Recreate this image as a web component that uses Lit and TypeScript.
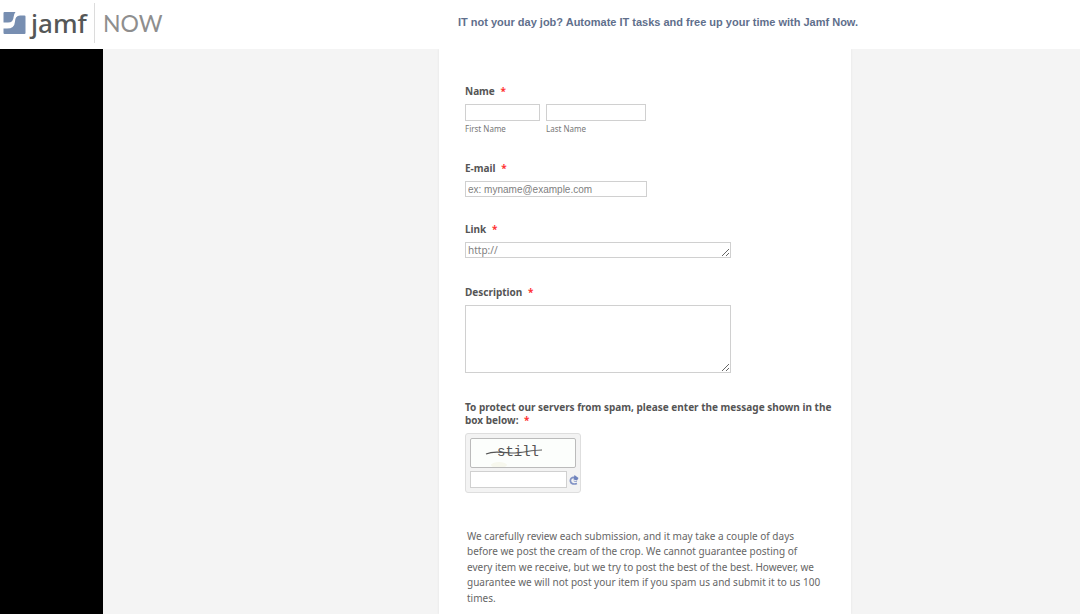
import { LitElement, html, css } from "lit";
import { customElement } from "lit/decorators.js";

@customElement("jamf-banner")
class JamfBanner extends LitElement {
  static styles = css`
    :host {
      display: grid;
      grid-template-columns: 236px 1fr;
      height: 49px;
      background: #fff;
    }
    .logo {
      display: flex;
      align-items: center;
      height: 46px;
      padding-left: 3px;
      color: #555757;
      text-decoration: none;
      font-family: Lato, sans-serif;
      line-height: 32px;
    }
    .mark {
      width: 23px;
      height: 23px;
      margin-right: 5px;
    }
    .brand {
      width: 63px;
      font-family: "Noto Sans", sans-serif;
      font-size: 26px;
      font-weight: 500;
    }
    .product {
      padding-left: 8px;
      border-left: 1px solid #dcdcdc;
      color: #8e8e8e;
      font-size: 23px;
      line-height: 40px;
    }
    .promo {
      margin: 0;
      padding-top: 15px;
      text-align: center;
      font: bold 11px/15px "Liberation Sans", Arial, sans-serif;
      color: #5f6f8c;
    }
  `;
  render() {
    return html`
      <a class="logo" href="#">
        <svg class="mark" viewBox="0 0 23 23" aria-hidden="true">
          <path fill="#778eb1" d="M1.500 0H12.500Q10.800 2 10.600 5Q10.300 10.500 5 10.500H.5V1Q.5 0 1.500 0Z" />
          <path fill="#778eb1" d="M22.500 4.500V21Q22.500 22 21.500 22H1.500Q.5 22 .5 21V16.500H4Q11.500 16.500 11.800 10.500Q12 3.500 17 3.500H21.500Q22.500 3.500 22.500 4.500Z" />
        </svg>
        <span class="brand">jamf</span>
        <span class="product">NOW</span>
      </a>
      <p class="promo">IT not your day job? Automate IT tasks and free up your time with Jamf Now.</p>
    `;
  }
}

@customElement("submit-form")
class SubmitForm extends LitElement {
  static styles = css`
    :host {
      display: block;
      font-family: "Noto Sans", "Open Sans", sans-serif;
      color: #555;
    }
    * {
      box-sizing: border-box;
    }
    form {
      padding: 36px 16px 8px 26px;
    }
    .field {
      margin-bottom: 26px;
    }
    .area {
      margin-bottom: 28px;
    }
    .label {
      display: block;
      margin-bottom: 6px;
      font-size: 10px;
      font-weight: 700;
      line-height: 13px;
    }
    .req {
      margin-left: 3px;
      color: #f33;
    }
    input,
    textarea {
      display: block;
      height: 16px;
      margin: 0;
      padding: 0 2px;
      border: 1px solid #d0d0d0;
      border-radius: 0;
      background: #fff;
      color: #555;
      font: 10px/14px "Liberation Sans", Arial, sans-serif;
      outline: none;
    }
    ::placeholder {
      color: #808080;
      opacity: 1;
    }
    .names {
      display: flex;
      gap: 6px;
    }
    .names input {
      height: 17px;
    }
    .first {
      width: 75px;
    }
    .last {
      width: 100px;
    }
    .sub {
      display: block;
      font-size: 8px;
      line-height: 15px;
      color: #777;
    }
    .email {
      width: 182px;
    }
    textarea {
      width: 266px;
      max-width: 100%;
      overflow: hidden;
      resize: both;
      font-family: "Noto Sans", sans-serif;
    }
    .tall {
      height: 68px;
    }
    .captcha {
      display: grid;
      grid-template-columns: 96px 10px;
      gap: 3px;
      width: 116px;
      padding: 4px;
      border: 1px solid #dedede;
      border-radius: 3px;
      background: #f3f3f3;
    }
    .word {
      grid-column: 1 / -1;
      width: 106px;
      height: 30px;
      border: 1px solid #bbb;
      border-radius: 2px;
      background: #fcfefc;
    }
    .word text {
      font: 14px "Liberation Mono", monospace;
      fill: #555;
    }
    .captcha input {
      width: 97px;
      height: 17px;
    }
    .reload {
      align-self: center;
      width: 10px;
      height: 10px;
      padding: 0;
      border: 0;
      background: none;
    }
    .reload svg {
      display: block;
      width: 10px;
      height: 10px;
    }
    .note {
      margin: 36px 0 0;
      padding: 0 14px 0 2px;
      font-size: 10px;
      line-height: 1.54;
      color: #666;
    }
  `;
  render() {
    const req = html`<span class="req">*</span>`;
    return html`
      <form>
        <div class="field" role="group" aria-labelledby="name-label">
          <span class="label" id="name-label">Name ${req}</span>
          <div class="names">
            <div>
              <input class="first" id="first" type="text" />
              <label class="sub" for="first">First Name</label>
            </div>
            <div>
              <input class="last" id="last" type="text" />
              <label class="sub" for="last">Last Name</label>
            </div>
          </div>
        </div>
        <div class="field">
          <label class="label" for="email">E-mail ${req}</label>
          <input class="email" id="email" type="email" placeholder="ex: myname@example.com" />
        </div>
        <div class="field area">
          <label class="label" for="link">Link ${req}</label>
          <textarea id="link" placeholder="http://"></textarea>
        </div>
        <div class="field area">
          <label class="label" for="description">Description ${req}</label>
          <textarea class="tall" id="description"></textarea>
        </div>
        <div class="field">
          <label class="label" for="captcha">To protect our servers from spam, please enter the message shown in the box below: ${req}</label>
          <div class="captcha">
            <svg class="word" viewBox="0 0 104 28">
              <ellipse cx="28" cy="26" rx="8" ry="3" fill="#f7f8ee" />
              <text x="26" y="17">still</text>
              <path d="M15 15C24 11 30 14 41 14S60 11 71 11" fill="none" stroke="#555" stroke-width="1.2" />
            </svg>
            <input id="captcha" type="text" />
            <button class="reload" type="button" aria-label="Reload">
              <svg viewBox="0 0 10 10" fill="none">
                <path d="M6 2.500C2.500 2 1 4 1.500 6.500S5 9.500 8 8.500" stroke="#8293c5" stroke-width="1.700" />
                <path d="M5 5.500Q4 7 8 6.500" stroke="#9eacd3" />
                <path d="M5.500 0L9.500 3L8 5.500L4.500 4.500Z" fill="#6f83bd" />
              </svg>
            </button>
          </div>
        </div>
        <p class="note">We carefully review each submission, and it may take a couple of days before we post the cream of the crop. We cannot guarantee posting of every item we receive, but we try to post the best of the best. However, we guarantee we will not post your item if you spam us and submit it to us 100 times.</p>
      </form>
    `;
  }
}

@customElement("app-root")
class AppRoot extends LitElement {
  static styles = css`
    :host {
      display: flex;
      flex-direction: column;
      height: 100vh;
      overflow: hidden;
    }
    jamf-banner {
      z-index: 1;
    }
    .body {
      display: grid;
      grid-template-columns: 103px 1fr;
      flex: 1;
      min-height: 0;
    }
    .rail {
      background: #000;
    }
    main {
      display: flex;
      justify-content: center;
      padding-left: 107px;
      background: #f4f4f4;
    }
    .card {
      width: 100%;
      max-width: 412px;
      background: #fff;
      box-shadow: 0 0 2px #e2e2e2;
    }
  `;
  render() {
    return html`
      <jamf-banner></jamf-banner>
      <div class="body">
        <div class="rail"></div>
        <main><submit-form class="card"></submit-form></main>
      </div>
    `;
  }
}
